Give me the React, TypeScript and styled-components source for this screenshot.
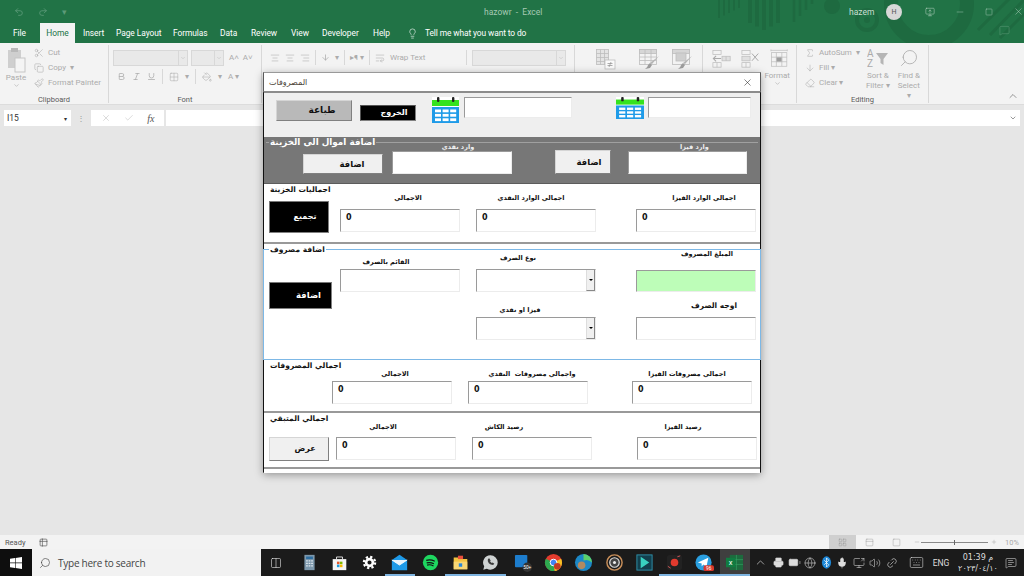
import React from 'react';
import styled, { createGlobalStyle } from 'styled-components';
import { Undo2, Redo2, Lightbulb, Scissors, Copy, Paintbrush, Search, ChevronUp, ChevronDown, X, Check, Printer, Globe, Mic, Volume2, Link2, Keyboard, Eraser, MessageSquare, Minus, Square, LayoutGrid, Columns2, AlignCenter, AlignRight, WrapText, Bold, Italic, Underline, Grid2x2, PaintBucket, Sigma, ArrowDown, MonitorUp, Battery, ScreenShare, MessageSquareText, Table2, Plus, PanelTop } from 'lucide-react';

const Global = createGlobalStyle`
  html, body { margin: 0; padding: 0; width: 1024px; height: 576px; overflow: hidden; }
  body { font-family: Roboto, "Open Sans", sans-serif; background: #e6e6e6; }
  * { box-sizing: border-box; }
`;
const Page = styled.div`position: relative; width: 1024px; height: 576px; display: flex; flex-direction: column; overflow: hidden;`;

/* ---------- Title bar ---------- */
const Head = styled.header`position: relative; height: 43px; background: #217346; color: #fff; overflow: hidden; flex: none;`;
const Pattern = styled.svg`position: absolute; left: 700px; top: 0;`;
const TitleRow = styled.div`position: relative; height: 23px; display: flex; align-items: center; padding: 0 0 0 14px; color: #a6c9b4; font-size: 8.5px;`;
const Qat = styled.div`display: flex; align-items: center; gap: 14px; width: 470px; color: #5c9a78;`;
const DocName = styled.span`width: 365px;`;
const User = styled.span`color: #c9dfd2; width: 37px;`;
const Avatar = styled.span`width: 16px; height: 16px; border-radius: 50%; background: #d8d8d8; color: #555; font-size: 7px; display: flex; align-items: center; justify-content: center; margin-right: 23px;`;
const WinBtns = styled.div`display: flex; align-items: center; gap: 20px; color: #bcd6c7;`;
const TabRow = styled.nav`position: relative; height: 20px; display: flex; align-items: stretch; padding-left: 13px; font-size: 8.4px; color: #fff; letter-spacing: -.05px;`;
const Tab = styled.span<{ $w: number; $on?: boolean; $pl?: number }>`
  width: ${p => p.$w}px; display: flex; align-items: center; padding-left: ${p => p.$pl ?? 0}px;
  ${p => p.$on ? 'background:#f3f3f3;color:#217346;justify-content:center;' : ''}
`;
const TellMe = styled.span`display: flex; align-items: center; gap: 7px; margin-left: 11px; letter-spacing: -.1px;`;
const Comment = styled.span`position: absolute; right: 14px; top: 2px; color: #5c9a78;`;

/* ---------- Ribbon ---------- */
const Ribbon = styled.section`height: 62px; background: #f3f3f3; display: flex; flex: none; border-bottom: 1px solid #dcdcdc; color: #ababab; font-size: 8px; position: relative;`;
const Group = styled.div<{ $w: number }>`
  width: ${p => p.$w}px; flex: none; height: 58px; margin-top: 2px; border-right: 1px solid #d8d8d8;
  position: relative; display: flex; gap: 5px; padding: 0 4px;
`;
const GroupLabel = styled.span`position: absolute; left: 0; right: 0; bottom: -1px; text-align: center; color: #5a5a5a; font-size: 7.5px;`;
const Col = styled.div<{ $gap?: number; $w?: number; $ml?: number; $pt?: number }>`
  display: flex; flex-direction: column; gap: ${p => p.$gap ?? 0}px; align-items: center;
  padding-top: ${p => p.$pt ?? 0}px;
  ${p => p.$w ? `width:${p.$w}px;` : ''} ${p => p.$ml ? `margin-left:${p.$ml}px;` : ''}
`;
const Line = styled.div<{ $gap?: number; $ml?: number; $mt?: number; $h?: number }>`
  display: flex; align-items: center; gap: ${p => p.$gap ?? 4}px; white-space: nowrap; height: ${p => p.$h ?? 15}px;
  ${p => p.$ml ? `margin-left:${p.$ml}px;` : ''} ${p => p.$mt ? `margin-top:${p.$mt}px;` : ''}
`;
const Left = styled(Col)`align-items: flex-start;`;
const ComboBox = styled.div<{ $w: number; $ml?: number }>`width: ${p => p.$w}px; height: 16px; background: #e9e9e9; border: 1px solid #d8d8d8; display: flex; justify-content: flex-end; align-items: center; color: #bbb; margin-left: ${p => p.$ml ?? 0}px; flex: none;`;
const ComboEnd = styled.span`width: 9px; height: 100%; border-left: 1px solid #d8d8d8; display: flex; align-items: center; justify-content: center;`;
const Stack = styled.span`text-align: center; line-height: 10px; display: block;`;
const PasteIcon = styled.svg`display: block; margin-top: 3px;`;
const RibSep = styled.span`width: 1px; height: 15px; background: #d8d8d8; flex: none;`;
const Grow = styled.span<{ $w: number }>`width: ${p => p.$w}px; flex: none; display: block;`;
const FormatCol = styled(Col)`position: absolute; right: 6px; top: 26px;`;

/* ---------- Formula bar ---------- */
const Formula = styled.div`height: 26px; background: #e6e6e6; display: flex; align-items: center; padding: 0 4px 0 4px; flex: none; margin-bottom: 4px;`;
const NameBox = styled.div`width: 67px; height: 16px; background: #fff; font-size: 8.5px; color: #333; display: flex; align-items: center; justify-content: space-between; padding: 0 4px 0 3px;`;
const NameArrow = styled.span`font-size: 6px;`;
const Grip = styled.span`width: 20px; text-align: center; color: #999; font-size: 8px;`;
const FxBox = styled.div`width: 73px; height: 16px; background: #fff; display: flex; align-items: center; justify-content: space-around; color: #aaa; padding: 0 3px;`;
const Fx = styled.i`font-family: "Liberation Serif", serif; font-size: 10px; color: #555;`;
const FInput = styled.div`flex: 1; height: 16px; background: #fff; margin-left: 2px; display: flex; align-items: center; justify-content: flex-end; padding-right: 3px; color: #666;`;
const Sheet = styled.main`flex: 1; background: #e6e6e6;`;

/* ---------- Status bar ---------- */
const Status = styled.footer`height: 14px; flex: none; background: #f3f3f3; display: flex; align-items: center; font-size: 7.5px; color: #555; padding-left: 5px;`;
const StatusIcon = styled.span`margin-left: 14px; display: flex; color: #666;`;
const ViewBtns = styled.div`margin-left: auto; display: flex; align-items: center; height: 100%; color: #888;`;
const ViewBtn = styled.span<{ $on?: boolean }>`width: 27px; height: 14px; display: flex; align-items: center; justify-content: center; ${p => p.$on ? 'background:#cfcfcf;' : ''}`;
const Slider = styled.span`position: relative; display: block; width: 67px; height: 1px; background: #888; margin: 0 3px 0 1px;`;
const Thumb = styled.span`position: absolute; left: 33px; top: -2px; width: 1px; height: 5px; background: #666;`;
const Pct = styled.span`color: #aaa; margin: 0 6px 0 8px; width: 13px;`;
const ZoomBtn = styled.span`display: flex; margin-left: 4px; color: #aaa;`;

/* ---------- Taskbar ---------- */
const Taskbar = styled.div`height: 27px; flex: none; background: #1b1b1b; display: flex; align-items: stretch; color: #e8e8e8;`;
const Start = styled.div`width: 32px; background: #0e0e0e; display: flex; align-items: center; justify-content: center;`;
const SearchBox = styled.div`width: 229px; background: #f2f2f2; color: #444; font-size: 10px; display: flex; align-items: center; gap: 7px; padding-left: 7px; font-family: "Open Sans", sans-serif; letter-spacing: -.25px;`;
const Slot = styled.div<{ $on?: boolean; $bar?: boolean; $ml?: number }>`
  width: 30.2px; display: flex; align-items: center; justify-content: center; position: relative; flex: none;
  margin-left: ${p => p.$ml ?? 0}px;
  ${p => p.$on ? 'background:#3f3f3f;' : ''}
  ${p => p.$bar ? 'box-shadow: inset 0 -2px 0 #7eb4e0;' : ''}
`;
const Tray = styled.div`display: flex; align-items: center; gap: 0; color: #ddd; flex: 1;`;
const TrayItem = styled.span<{ $w: number }>`width: ${p => p.$w}px; display: flex; align-items: center; justify-content: center; font-size: 8.5px; flex: none;`;
const Clock = styled.span`width: 52px; text-align: center; font-size: 8px; line-height: 11px; font-family: "DejaVu Sans", sans-serif; flex: none;`;

/* ---------- Dialog ---------- */
const Dialog = styled.div`
  position: absolute; left: 263px; top: 72px; width: 498px; height: 401px;
  background: #f0f0f0; border: 1px solid #5a5a5a; border-top-color: #999;
  box-shadow: 0 2px 8px rgba(0,0,0,.35); display: flex; flex-direction: column;
  font-family: "DejaVu Sans", "Noto Sans", sans-serif;
`;
const DlgTitle = styled.div`height: 18px; background: #fff; display: flex; align-items: center; justify-content: space-between; padding: 0 7px 0 5px; font-size: 8px; color: #4a3f35; flex: none;`;
const DlgBody = styled.div`flex: 1; border-top: 2px solid #8c8c8c; border-left: 1px solid #111; border-right: 1px solid #111; margin: 0 -1px; display: flex; flex-direction: column; min-height: 0;`;
const TopBar = styled.div`height: 44px; flex: none; background: #efefef; display: flex; padding: 4px 0 0 12px;`;
const Btn = styled.button<{ $w: number; $h: number; $bg: string; $fg: string; $edge?: string; $mt?: number; $ml?: number; $size?: number; $dx?: number }>`
  width: ${p => p.$w}px; height: ${p => p.$h}px; flex: none; background: ${p => p.$bg}; color: ${p => p.$fg};
  margin-top: ${p => p.$mt ?? 0}px; margin-left: ${p => p.$ml ?? 0}px;
  border: 1px solid ${p => p.$edge ?? '#d5d5d5'}; border-right-color: #808080; border-bottom-color: #808080;
  padding: 0 0 0 ${p => (p.$dx ?? 0) * 2}px; line-height: 1;
  font-family: "DejaVu Sans", sans-serif; font-weight: 700; font-size: ${p => p.$size ?? 8}px; cursor: default;
`;
const Field = styled.div<{ $w?: number; $ml?: number; $mt?: number }>`
  width: ${p => p.$w ?? 120}px; flex: none; display: flex; flex-direction: column;
  margin-left: ${p => p.$ml ?? 0}px; margin-top: ${p => p.$mt ?? 0}px;
`;
const FieldLabel = styled.span<{ $h?: number; $lh?: number; $dx?: number; $color?: string; $size?: number }>`
  height: ${p => p.$h ?? 11}px; font-size: ${p => p.$size ?? 6.5}px; font-weight: 700; color: ${p => p.$color ?? '#111'};
  text-align: center; line-height: ${p => p.$lh ?? p.$h ?? 11}px; white-space: pre; direction: rtl;
  padding-left: ${p => Math.max(p.$dx ?? 0, 0) * 2}px; padding-right: ${p => Math.max(-(p.$dx ?? 0), 0) * 2}px;
`;
const Input = styled.div<{ $h?: number; $bg?: string; $w?: number; $ml?: number; $mt?: number }>`
  height: ${p => p.$h ?? 23}px; width: ${p => p.$w ? `${p.$w}px` : '100%'}; flex: none;
  background: ${p => p.$bg ?? '#fff'};
  border-top: 1px solid #9a9a9a; border-left: 1px solid #9a9a9a; border-right: 1px solid #ececec; border-bottom: 1px solid #ececec;
  font-family: "DejaVu Sans", sans-serif; font-size: 8px; font-weight: 700; color: #111; padding: 2px 0 0 5px; line-height: 11px;
  margin-left: ${p => p.$ml ?? 0}px; margin-top: ${p => p.$mt ?? 0}px; position: relative;
`;
const ComboArrow = styled.span`position: absolute; right: 0; top: 0; bottom: 0; width: 9px; background: #f0f0f0; border-left: 1px solid #ddd; border-right: 1px solid #888; border-bottom: 1px solid #888; display: flex; align-items: center; justify-content: center;
  &::after { content: ""; border-left: 2px solid transparent; border-right: 2px solid transparent; border-top: 2px solid #000; }`;
const Section = styled.section<{ $h: number; $bg: string; $pl?: number; $pt?: number; $bb?: string }>`
  position: relative; height: ${p => p.$h}px; flex: none; background: ${p => p.$bg};
  display: flex; padding: ${p => p.$pt ?? 0}px 0 0 ${p => p.$pl ?? 0}px;
  ${p => p.$bb ? `border-bottom:${p.$bb};` : ''}
`;
const Frame = styled.div`position: absolute; left: -1px; right: -1px; top: 5px; bottom: 0; border: 1px solid #7db8e6; pointer-events: none;`;
const Legend = styled.span<{ $top: number; $color: string; $bg: string; $size?: number }>`
  position: absolute; left: 5px; top: ${p => p.$top}px; padding: 0 1px; font-size: ${p => p.$size ?? 7.5}px; line-height: 11px; font-weight: 700;
  color: ${p => p.$color}; background: ${p => p.$bg}; direction: rtl; white-space: nowrap;
`;
const GrayLine = styled.div`position: absolute; left: 2px; right: 2px; top: 5px; height: 1px; background: #a0a0a0;`;
const FieldCol = styled.div<{ $ml?: number }>`display: flex; flex-direction: column; flex: none; margin-left: ${p => p.$ml ?? 0}px;`;
const CalSvg = styled.svg<{ $ml: number }>`margin-left: ${p => p.$ml}px; flex: none;`;
const SearchGlyph = styled(Search)`transform: scaleX(-1);`;
const LinkGlyph = styled(Link2)`transform: rotate(-45deg);`;
const CollapseIcon = styled(ChevronUp)`position: absolute; right: 5px; bottom: 2px; color: #555;`;
const SpacedStack = styled(Stack)`margin-top: 3px;`;

const Calendar = ({ ml = 0, h = 26, w = 27 }: { ml?: number; h?: number; w?: number }) => (
  <CalSvg $ml={ml} width={w} height={h} viewBox="0 0 27 26" preserveAspectRatio="none">
    <rect width="27" height="26" fill="#fff" />
    <rect x="0" y="3" width="27" height="6" fill="#35e21d" />
    <rect x="5" y="0" width="2.4" height="5" rx="1" fill="#222" />
    <rect x="20" y="0" width="2.4" height="5" rx="1" fill="#222" />
    <rect x="0" y="10" width="27" height="16" fill="#1f9be8" />
    {[0, 1, 2].map(r => [0, 1, 2].map(c => (
      <rect key={`${r}${c}`} x={3 + c * 7.6} y={12.5 + r * 4.4} width="6" height="2.8" fill="#fff" />
    )))}
  </CalSvg>
);

const ExcelPattern = () => (
  <Pattern width="324" height="43" viewBox="0 0 324 43" fill="none" stroke="#1e6a40">
    {[0, 5, 10, 15, 20].map(i => <path key={i} d={`M${19 + i} 0V${18 - i / 2}`} strokeWidth="2" />)}
    {[0, 7, 14, 21, 28].map(i => <path key={i} d={`M${50 + i} 0V${30 - Math.abs(i - 14) / 2}`} strokeWidth="4" />)}
    {[0, 6, 12, 18].map(i => <path key={i} d={`M${94 + i} 0V${22 - i}`} strokeWidth="2.5" />)}
    <circle cx="132" cy="6" r="8" fill="#1e6a40" stroke="none" />
    <circle cx="167" cy="20" r="10" strokeWidth="4" />
    <circle cx="167" cy="20" r="3" fill="#1e6a40" stroke="none" />
    <circle cx="229" cy="4" r="38" strokeWidth="14" />
    <path d="M290 35 324 0M300 38 330 8M278 30 310 -2" strokeWidth="3" />
  </Pattern>
);

const Win = () => (
  <svg width="12" height="12" viewBox="0 0 12 12" fill="#fff"><path d="M0 1.7 5 1v4.6H0zM5.6.9 12 0v5.6H5.6zM0 6.2h5v4.7l-5-.7zM5.6 6.2H12V12l-6.4-.9z" /></svg>
);
const Ic = ({ children, s = 17 }: { children: React.ReactNode; s?: number }) => (
  <svg width={s} height={s} viewBox="0 0 20 20">{children}</svg>
);

const xl = { size: 10, strokeWidth: 1.3 };
const RibbonSvg = ({ children, w = 22 }: { children: React.ReactNode; w?: number }) => (
  <svg width={w} height="22" viewBox="0 0 22 22" fill="none" stroke="#bdbdbd" strokeWidth=".8">{children}</svg>
);
const CondFormat = () => (
  <RibbonSvg>
    <rect x="1.5" y="1.5" width="12" height="15" fill="#e4e4e4" />
    <path d="M1.5 5.5h12M1.5 9.5h12M1.5 13.5h12M5.5 1.5v15M9.5 1.5v15" />
    <rect x="10" y="12" width="10" height="9" fill="#fafafa" />
    <path d="M12.5 15.5h5M12.5 17.5h5M16 14l-2 5" stroke="#999" />
  </RibbonSvg>
);
const TableBrush = ({ fill = false }: { fill?: boolean }) => (
  <RibbonSvg>
    <rect x="1.5" y="1.5" width="17" height="15" fill="#f3f3f3" />
    <rect x="1.5" y="1.5" width="17" height="4" fill="#d6d6d6" />
    {fill && <rect x="5" y="5" width="10" height="8" fill="#cfcfcf" />}
    {!fill && <path d="M1.5 9h17M1.5 12.5h17M7 1.5v15M13 1.5v15" />}
    <path d="M21 8l-7 8-2-1z" fill="#b5b5b5" stroke="none" />
    <path d="M12 15l2 2-2 3-5 1q3-2 3-4z" fill="#9d9d9d" stroke="none" />
  </RibbonSvg>
);
const InsertCell = () => (
  <RibbonSvg w={20}>
    <rect x="1" y="1.5" width="9" height="4.5" /><rect x="1" y="15" width="9" height="5" /><path d="M5.5 15v5" />
    <rect x="11" y="8" width="9" height="5" fill="#e0e0e0" /><path d="M15.5 8v5" />
    <path d="M10 10.5H1.5M4.5 7.5l-3 3 3 3" stroke="#aaa" strokeWidth="1.2" />
  </RibbonSvg>
);
const DeleteCell = () => (
  <RibbonSvg w={20}>
    <rect x="1" y="1.5" width="9" height="4.5" /><rect x="1" y="15" width="9" height="5" /><path d="M5.5 15v5" />
    <rect x="1" y="8" width="9" height="5" fill="#e0e0e0" />
    <path d="M12 5l7 8M19 5l-7 8" stroke="#aaa" strokeWidth="1.1" />
  </RibbonSvg>
);
const FormatCell = () => (
  <RibbonSvg w={20}>
    <path d="M1 1.500h18M1 .5v2M19 .5v2" />
    <rect x="1.5" y="4" width="17" height="15" />
    <path d="M1.5 9h17M1.5 14h17M7 4v15M13 4v15" />
    <rect x="7" y="9" width="6" height="5" fill="#9d9d9d" />
  </RibbonSvg>
);
const SortFilter = () => (
  <svg width="22" height="20" viewBox="0 0 22 20">
    <text x="0" y="9" fontSize="10" fontFamily="Roboto, sans-serif" fill="#aaa">A</text>
    <text x="0" y="19" fontSize="10" fontFamily="Roboto, sans-serif" fill="#aaa">Z</text>
    <path d="M9 5h12l-4.5 6v6l-3-2v-4z" fill="#b5b5b5" />
  </svg>
);

const App = () => (
  <Page>
    <Global />
    <Head>
      <ExcelPattern />
      <TitleRow>
        <Qat>
          <Undo2 size={10} /><Redo2 size={10} /><span>▾</span>
        </Qat>
        <DocName>hazowr&nbsp; -&nbsp; Excel</DocName>
        <User>hazem</User>
        <Avatar>H</Avatar>
        <WinBtns><MonitorUp size={10} strokeWidth={1.2} /><Minus size={10} strokeWidth={1} /><Square size={8} strokeWidth={1.2} /><X size={11} strokeWidth={1} /></WinBtns>
      </TitleRow>
      <TabRow>
        <Tab $w={27}>File</Tab>
        <Tab $w={35} $on>Home</Tab>
        <Tab $w={41} $pl={8}>Insert</Tab>
        <Tab $w={57}>Page Layout</Tab>
        <Tab $w={47}>Formulas</Tab>
        <Tab $w={31}>Data</Tab>
        <Tab $w={40}>Review</Tab>
        <Tab $w={31}>View</Tab>
        <Tab $w={51}>Developer</Tab>
        <Tab $w={23}>Help</Tab>
        <TellMe><Lightbulb size={11} strokeWidth={1.3} />Tell me what you want to do</TellMe>
        <Comment><MessageSquare size={11} strokeWidth={1.2} /></Comment>
      </TabRow>
    </Head>

    <Ribbon>
      <Group $w={109}>
        <Col $w={24}>
          <PasteIcon width="19" height="25" viewBox="0 0 19 25"><rect x="1" y="2" width="13" height="18" fill="#cfcfcf" /><rect x="4" y="0" width="7" height="4" fill="#b9b9b9" /><rect x="8" y="10" width="10" height="14" fill="#f4f4f4" stroke="#c6c6c6" /></PasteIcon>
          <span>Paste</span>
          <ChevronDown size={7} />
        </Col>
        <Left $ml={1}>
          <Line><Scissors {...xl} />Cut</Line>
          <Line><Copy {...xl} />Copy&nbsp; ▾</Line>
          <Line><Paintbrush {...xl} />Format Painter</Line>
        </Left>
        <GroupLabel>Clipboard</GroupLabel>
      </Group>
      <Group $w={153}>
        <Left $gap={4} $pt={5}>
          <Line $gap={3}><ComboBox $w={75}><ComboEnd><ChevronDown size={6} /></ComboEnd></ComboBox><ComboBox $w={33}><ComboEnd><ChevronDown size={6} /></ComboEnd></ComboBox><span>&nbsp;A˄&nbsp;&nbsp;A˅</span></Line>
          <Line $gap={6} $ml={4}><Bold size={9} /><Italic size={9} /><Underline size={9} /><RibSep /><Grid2x2 {...xl} /><span>▾</span><RibSep /><PaintBucket {...xl} /><span>▾</span><span>A ▾</span></Line>
        </Left>
        <GroupLabel>Font</GroupLabel>
      </Group>
      <Group $w={313}>
        <Left $pt={5}>
          <Line $gap={5} $ml={4}>
            <AlignCenter {...xl} /><AlignCenter {...xl} /><AlignRight {...xl} /><RibSep /><ArrowDown size={9} /><span>▾</span><RibSep /><span>▸¶ ▾</span><RibSep />
            <WrapText {...xl} /><span>Wrap Text</span><Grow $w={31} /><RibSep />
            <ComboBox $w={94}><ComboEnd><ChevronDown size={6} /></ComboEnd></ComboBox>
          </Line>
        </Left>
      </Group>
      <Group $w={128}>
        <Line $ml={16} $mt={3} $gap={0} $h={22}>
          <CondFormat /><Grow $w={21} /><TableBrush /><Grow $w={11} /><TableBrush fill />
        </Line>
      </Group>
      <Group $w={94}>
        <Line $gap={9} $ml={5} $mt={3} $h={22}>
          <InsertCell /><DeleteCell /><FormatCell />
        </Line>
        <FormatCol>
          <span>Format</span><ChevronDown size={7} />
        </FormatCol>
      </Group>
      <Group $w={132}>
        <Left $ml={4}>
          <Line><Sigma {...xl} />AutoSum&nbsp; ▾</Line>
          <Line><ArrowDown {...xl} />Fill ▾</Line>
          <Line><Eraser {...xl} />Clear ▾</Line>
        </Left>
        <Col $w={26} $pt={3}>
          <SortFilter />
          <SpacedStack>Sort &amp;<br />Filter ▾</SpacedStack>
        </Col>
        <Col $w={26} $pt={3}>
          <SearchGlyph size={20} strokeWidth={1} />
          <SpacedStack>Find &amp;<br />Select ▾</SpacedStack>
        </Col>
        <GroupLabel>Editing</GroupLabel>
      </Group>
      <CollapseIcon size={12} strokeWidth={1.2} />
    </Ribbon>

    <Formula>
      <NameBox>I15<NameArrow>▾</NameArrow></NameBox>
      <Grip>⋮</Grip>
      <FxBox><X size={10} strokeWidth={1} /><Check size={10} strokeWidth={1} /><Fx>fx</Fx></FxBox>
      <FInput><ChevronDown size={8} /></FInput>
    </Formula>
    <Sheet />

    <Status>
      Ready
      <StatusIcon><Table2 size={9} /></StatusIcon>
      <ViewBtns>
        <ViewBtn $on><LayoutGrid size={9} strokeWidth={1} /></ViewBtn>
        <ViewBtn><PanelTop size={9} strokeWidth={1} /></ViewBtn>
        <ViewBtn><Square size={9} strokeWidth={1} /></ViewBtn>
        <ZoomBtn><Minus size={6} /></ZoomBtn><Slider><Thumb /></Slider><Plus size={6} color="#aaa" />
        <Pct>10%</Pct>
      </ViewBtns>
    </Status>

    <Taskbar>
      <Start><Win /></Start>
      <SearchBox><SearchGlyph size={12} strokeWidth={1.3} />Type here to search</SearchBox>
      <Slot><Columns2 size={12} strokeWidth={1.2} /></Slot>
      <Slot $ml={3}><Ic><rect x="4" y="1" width="12" height="18" fill="#7d98ac" /><rect x="6" y="3" width="8" height="3" fill="#2d6da0" /><path d="M6 8h8M6 11h8M6 14h8" stroke="#dfe8ee" strokeWidth="1.5" strokeDasharray="2 1" /></Ic></Slot>
      <Slot><Ic><path d="M2 6h16v13H2z" fill="#f5f5f5" /><path d="M6.5 6V3.5h7V6" fill="none" stroke="#f5f5f5" /><rect x="7" y="9" width="3" height="3" fill="#e8562a" /><rect x="10.5" y="9" width="3" height="3" fill="#7fba00" /><rect x="7" y="12.5" width="3" height="3" fill="#1a9be0" /><rect x="10.5" y="12.5" width="3" height="3" fill="#f9b900" /></Ic></Slot>
      <Slot><Ic s={15}><circle cx="10" cy="10" r="4.5" fill="none" stroke="#fff" strokeWidth="3.5" /><circle cx="10" cy="10" r="7.5" fill="none" stroke="#fff" strokeWidth="3" strokeDasharray="3 2.89" /></Ic></Slot>
      <Slot $bar><Ic><path d="M1 7 10 1l9 6v12H1z" fill="#1e9ae8" /><path d="M1 7l9 6 9-6" fill="#e8f4fd" stroke="#fff" strokeWidth="1" /></Ic></Slot>
      <Slot><Ic><circle cx="10" cy="10" r="9" fill="#1ed760" /><path d="M5 7.5q5-1.5 10 1M5.5 10.5q4.5-1 8.5 1M6 13q4-1 7.5 1" fill="none" stroke="#111" strokeWidth="1.4" /></Ic></Slot>
      <Slot $bar><Ic><path d="M2 4h7l1 2h8v12H2z" fill="#f4c542" /><rect x="2" y="9" width="16" height="9" fill="#f8d775" /><rect x="7" y="2" width="6" height="4" fill="#e94f3c" /><rect x="8" y="11" width="4" height="4" fill="#2a88d8" /></Ic></Slot>
      <Slot $bar><Ic><path d="M10 1.5a8.5 8.5 0 0 1 0 17q-2.200 0-4.300-1.100L1.500 18.500l1.100-4A8.500 8.500 0 0 1 10 1.500z" fill="#cfd3d3" /><path d="M7 6q-1 3 1 5t5 2l1.500-1.500-2-1.500-1 .7-2-2 .7-1L8.500 5z" fill="#3b3b3b" /></Ic></Slot>
      <Slot $ml={3}><Ic s={19}><rect x="1" y="2" width="13" height="13" rx="1" fill="#1d7dcd" /><circle cx="14" cy="15" r="5" fill="#333" /><text x="14" y="17" fontSize="5" textAnchor="middle" fill="#fff">50+</text></Ic></Slot>
      <Slot><Ic s={19}><circle cx="10" cy="10" r="9" fill="#e33b2e" /><path d="M10 10 18 6A9 9 0 0 1 11 19z" fill="#f7c325" /><path d="M10 10 11 19A9 9 0 0 1 2 6z" fill="#2da94f" /><circle cx="10" cy="10" r="3.5" fill="#4285f4" stroke="#fff" /><circle cx="14" cy="14" r="3.5" fill="#c23b22" /></Ic></Slot>
      <Slot><Ic s={19}><circle cx="10" cy="10" r="9" fill="#1c88c7" /><path d="M10 1a9 9 0 0 1 9 9q-4-4-9-2z" fill="#5bd06d" /><circle cx="8" cy="13" r="4" fill="#b28a62" /></Ic></Slot>
      <Slot><Ic s={19}><circle cx="10" cy="10" r="8" fill="none" stroke="#c98f5a" strokeWidth="1.5" /><circle cx="10" cy="10" r="5" fill="#444" stroke="#ddd" strokeWidth="1.3" /><circle cx="10" cy="10" r="1.6" fill="#eee" /></Ic></Slot>
      <Slot><Ic s={19}><rect x="2" y="2" width="16" height="16" fill="#123f4d" stroke="#2f8fa8" /><path d="M6 4l9 6-9 6z" fill="#39d1c0" /></Ic></Slot>
      <Slot $bar><Ic s={19}><rect x="2" y="2" width="16" height="16" rx="3" fill="#222" /><circle cx="10" cy="10" r="4" fill="#e23a2e" /><path d="M13 4l3-1M3 14l3 2" stroke="#c55" /></Ic></Slot>
      <Slot $bar><Ic s={19}><circle cx="9" cy="10" r="8.5" fill="#2a9fe0" /><path d="M3 10l11-5-2 10-3-3-2 2v-3z" fill="#fff" /><rect x="9" y="13" width="11" height="6" rx="2" fill="#d8382c" /><text x="14.5" y="18" fontSize="5" textAnchor="middle" fill="#fff">96</text></Ic></Slot>
      <Slot $on $bar><Ic s={19}><rect x="5" y="2" width="14" height="16" fill="#1d6b3e" /><path d="M12 2v16M5 7h14M5 12h14" stroke="#34a262" strokeWidth=".7" /><rect x="1" y="5" width="10" height="10" fill="#107c41" /><text x="6" y="13" fontSize="8" textAnchor="middle" fill="#fff">x</text></Ic></Slot>
      <Tray>
        <TrayItem $w={20}><ChevronUp size={13} strokeWidth={1.2} /></TrayItem>
        <TrayItem $w={16}><Printer size={11} fill="#ddd" strokeWidth={1.2} /></TrayItem>
        <TrayItem $w={16}><Battery size={13} fill="#ddd" strokeWidth={1} /></TrayItem>
        <TrayItem $w={16}><Globe size={12} strokeWidth={1.1} /></TrayItem>
        <TrayItem $w={16}><Ic s={13}><ellipse cx="10" cy="10" rx="7" ry="9.5" fill="#1e88d8" /><path d="M6.5 6.5l7 7L10 17V3l3.5 3.5-7 7" fill="none" stroke="#fff" strokeWidth="1.1" /></Ic></TrayItem>
        <TrayItem $w={16}><Mic size={12} fill="#ddd" strokeWidth={1.1} /></TrayItem>
        <TrayItem $w={17}><ScreenShare size={12} strokeWidth={1.1} color="#ddd" /></TrayItem>
        <TrayItem $w={15}><Volume2 size={12} strokeWidth={1.1} /></TrayItem>
        <TrayItem $w={20}><LinkGlyph size={12} strokeWidth={1.2} /></TrayItem>
        <TrayItem $w={28}><Keyboard size={15} strokeWidth={.9} /></TrayItem>
        <TrayItem $w={22}>ENG</TrayItem>
        <Clock><span>01:39 م</span><br /><span>٢٠٢٣/٠٤/١٠</span></Clock>
        <TrayItem $w={14}><MessageSquareText size={12} strokeWidth={1.1} /></TrayItem>
      </Tray>
    </Taskbar>

    <Dialog>
      <DlgTitle><span dir="rtl">المصروفات</span><X size={11} strokeWidth={1.2} color="#222" /></DlgTitle>
      <DlgBody>
        <TopBar>
          <Btn $w={76} $h={21} $bg="#b9b9b9" $fg="#111" $mt={3} $size={9} $dx={8}>طباعة</Btn>
          <Btn $w={56} $h={16} $bg="#000" $fg="#fff" $edge="#555" $mt={8} $ml={8} $size={8} $dx={6}>الخروج</Btn>
          <Calendar ml={16} />
          <Input $w={108} $h={21} $ml={5} />
          <Calendar ml={44} w={28} h={22} />
          <Input $w={103} $h={21} $ml={4} />
        </TopBar>
        <Section $h={47} $bg="#777" $pl={39} $pt={6} $bb="1px solid #5c5c5c">
          <GrayLine />
          <Legend $top={0} $color="#fff" $bg="#777" $size={8.8}>اضافة اموال الي الخزينة</Legend>
          <Btn $w={80} $h={20} $bg="#f0f0f0" $fg="#111" $mt={11} $size={8.5} $dx={9}>اضافة</Btn>
          <Field $ml={9} $mt={1}>
            <FieldLabel $color="#f0f0f0" $h={7} $dx={6}>وارد نقدي</FieldLabel>
            <Input />
          </Field>
          <Btn $w={56} $h={24} $bg="#f0f0f0" $fg="#111" $mt={7} $ml={43} $size={8.5} $dx={6}>اضافة</Btn>
          <Field $ml={17} $mt={1} $w={119}>
            <FieldLabel $color="#f0f0f0" $h={7} $dx={7}>وارد فيزا</FieldLabel>
            <Input />
          </Field>
        </Section>
        <Section $h={60} $bg="#fff" $pl={5} $bb="2px solid #999">
          <Legend $top={0} $color="#111" $bg="#fff">اجماليات الخزينة</Legend>
          <Btn $w={60} $h={32} $bg="#000" $fg="#fff" $edge="#777" $mt={17} $size={8} $dx={6}>تجميع</Btn>
          <Field $ml={11} $mt={4}><FieldLabel $h={21} $dx={8}>الاجمالي</FieldLabel><Input>0</Input></Field>
          <Field $ml={16} $mt={4}><FieldLabel $h={21} $dx={-5}>اجمالي الوارد النقدي</FieldLabel><Input>0</Input></Field>
          <Field $ml={40} $mt={4}><FieldLabel $h={21} $dx={8}>اجمالي الوارد الفيزا</FieldLabel><Input>0</Input></Field>
        </Section>
        <Section $h={116} $bg="#fff" $pl={5}>
          <Frame />
          <Legend $top={0} $color="#111" $bg="#fff">اضافة مصروف</Legend>
          <Btn $w={63} $h={27} $bg="#000" $fg="#fff" $edge="#777" $mt={38} $size={8.5} $dx={8}>اضافة</Btn>
          <Field $ml={8} $mt={11}><FieldLabel $h={14} $dx={-14}>القائم بالصرف</FieldLabel><Input /></Field>
          <FieldCol $ml={16}>
            <Field $mt={4}><FieldLabel $h={21} $dx={-18}>نوع الصرف</FieldLabel><Input><ComboArrow /></Input></Field>
            <Field $mt={11}><FieldLabel $h={14} $dx={-16}>فيزا او نقدي</FieldLabel><Input><ComboArrow /></Input></Field>
          </FieldCol>
          <FieldCol $ml={40}>
            <Field><FieldLabel $h={26} $lh={20} $dx={11}>المبلغ المصروف</FieldLabel><Input $h={22} $bg="#bdfdb8" /></Field>
            <Field $mt={3}><FieldLabel $h={22} $size={7.5} $dx={18}>اوجه الصرف</FieldLabel><Input /></Field>
          </FieldCol>
        </Section>
        <Section $h={53} $bg="#fff" $pl={68} $bb="2px solid #999">
          <Legend $top={0} $color="#111" $bg="#fff">اجمالي المصروفات</Legend>
          <Field $mt={7}><FieldLabel $h={14} $dx={3}>الاجمالي</FieldLabel><Input>0</Input></Field>
          <Field $ml={16} $mt={7}><FieldLabel $h={14} $dx={4}>واجمالي مصروفات  النقدي</FieldLabel><Input>0</Input></Field>
          <Field $ml={44} $mt={7}><FieldLabel $h={14} $dx={-5}>اجمالي مصروفات الفيزا</FieldLabel><Input>0</Input></Field>
        </Section>
        <Section $h={56} $bg="#fff" $pl={5} $bb="2px solid #999">
          <Legend $top={0} $color="#111" $bg="#fff">اجمالي المتبقي</Legend>
          <Btn $w={60} $h={24} $bg="#f0f0f0" $fg="#111" $mt={24} $size={8} $dx={6}>عرض</Btn>
          <Field $ml={7} $mt={4}><FieldLabel $h={20} $dx={-13}>الاجمالي</FieldLabel><Input>0</Input></Field>
          <Field $ml={16} $mt={4}><FieldLabel $h={20} $dx={-28}>رصيد الكاش</FieldLabel><Input>0</Input></Field>
          <Field $ml={45} $mt={4}><FieldLabel $h={20} $dx={-14}>رصيد الفيزا</FieldLabel><Input>0</Input></Field>
        </Section>
        <Section $h={4} $bg="#fff" />
      </DlgBody>
    </Dialog>
  </Page>
);

export default App;
